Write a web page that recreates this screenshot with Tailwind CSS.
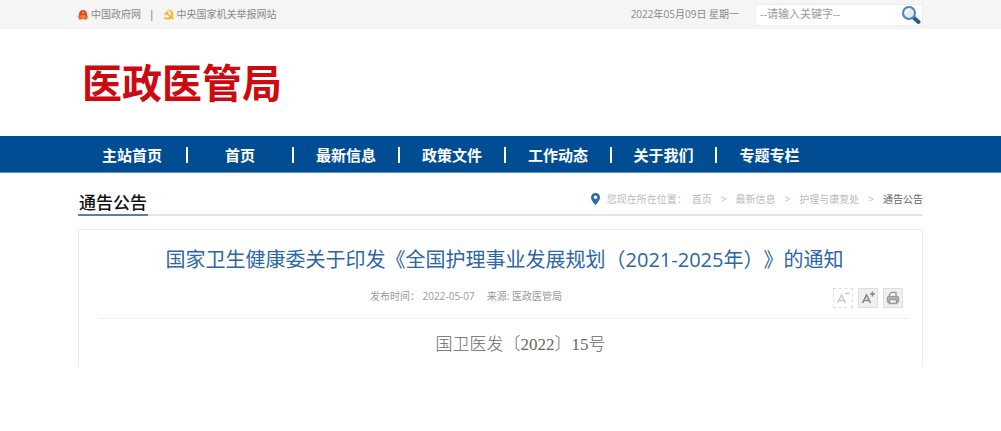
<!DOCTYPE html>
<html lang="zh-CN">
  <head>
    <meta charset="UTF-8" />
    <meta name="viewport" content="width=device-width, initial-scale=1.0" />
    <title>医政医管局</title>
    <script src="https://cdn.jsdelivr.net/npm/@tailwindcss/browser@4"></script>
  </head>
  <body class="bg-white font-['Open_Sans','Noto_Sans_CJK_SC',sans-serif] text-[10px] text-[#888] [text-spacing-trim:space-all]">
    <div class="bg-[#f5f5f5]">
      <div class="mx-auto flex h-[29px] max-w-[845px] items-center justify-between">
        <div class="flex items-center gap-2">
          <a href="#" class="flex items-center gap-[3px]">
            <svg class="size-[10px]" viewBox="0 0 10 10">
              <path d="M1 4.500C1 1.500 3 0 5 0s4 1.500 4 4.500V8H1z" fill="#e2451a" />
              <path d="M0 5.500h10L9 9.500H6.500L5 9l-1.500.5H1z" fill="#e8602a" />
              <path d="M5 1.200l.5 1 1 .1-.7.800.2 1L5 3.600l-1 .5.2-1-.7-.8 1-.1zM2.500 5.500h5v1h-5zM3.500 7.500h3v1h-3z" fill="#ffa63a" />
            </svg>
            中国政府网
          </a>
          <span class="text-[#666]">|</span>
          <a href="#" class="flex items-center gap-[3px]">
            <svg class="size-[11px]" viewBox="0 0 11 11">
              <path d="M4.500.5C9 0 11.500 4 10 7.500l1 2-1 1-1.500-1C6 11.500 2.500 10.500.5 9.500l1-1.500c2 1 4 1 5 0L3.800 5.200 2.500 6.500 1 5l3-3 2 1-1 1.200L7.800 7C9 4.500 7.500 2 4.500.5z" fill="#f5b92e" />
            </svg>
            中央国家机关举报网站
          </a>
        </div>
        <form class="flex items-center gap-4">
          <span>2022年05月09日 星期一</span>
          <div class="flex h-[22px] w-[168px] items-center border border-[#eee] bg-white pr-px pl-1">
            <input
              type="text"
              aria-label="搜索"
              placeholder="--请输入关键字--"
              class="min-w-0 flex-1 text-[11px] outline-none placeholder:text-[#999]"
            />
            <button type="button" aria-label="搜索">
              <svg class="size-5" viewBox="0 0 20 20" fill="none">
                <path d="M12.500 12.500l5 4.500" stroke="#24608f" stroke-width="4" stroke-linecap="round" />
                <circle cx="8" cy="8" r="6" fill="#dfecf6" stroke="#4a88b8" stroke-width="2" />
                <path d="M4.800 8a3.200 3.200 0 0 1 3.200-3.200" stroke="#fff" stroke-width="1.500" />
              </svg>
            </button>
          </div>
        </form>
      </div>
    </div>

    <header class="mx-auto flex h-[107px] max-w-[845px] items-center px-1">
      <h1 class="text-[40px] leading-none font-bold text-[#cc0a10]">医政医管局</h1>
    </header>

    <nav class="border-b border-[#5a93c8] bg-[#004d93]">
      <ul class="mx-auto flex h-9 max-w-[845px] items-center pt-px text-[15px] leading-4 font-bold text-white">
        <li class="w-[110px] border-r-2 text-center"><a href="#">主站首页</a></li>
        <li class="w-[106px] border-r-2 text-center"><a href="#">首页</a></li>
        <li class="w-[106px] border-r-2 text-center"><a href="#">最新信息</a></li>
        <li class="w-[106px] border-r-2 text-center"><a href="#">政策文件</a></li>
        <li class="w-[106px] border-r-2 text-center"><a href="#">工作动态</a></li>
        <li class="w-[105px] border-r-2 text-center"><a href="#">关于我们</a></li>
        <li class="w-[105px] text-center"><a href="#">专题专栏</a></li>
      </ul>
    </nav>

    <main class="mx-auto max-w-[845px]">
      <div class="mt-[18px] flex h-[25px] items-end justify-between border-b-2 border-[#e2e4e6]">
        <h2 class="-mb-[2px] border-b-2 border-[#5d7f9f] px-px text-[17px] leading-[22px] font-medium text-[#111]">通告公告</h2>
        <div class="flex items-center gap-[7px] self-start leading-4 text-[#bbb]">
          <svg class="h-3 w-[9px]" viewBox="0 0 9 12">
            <path d="M4.500 0A4.400 4.400 0 0 0 0 4.400C0 7.500 4.500 12 4.500 12S9 7.500 9 4.400A4.400 4.400 0 0 0 4.500 0z" fill="#2a6ea8" />
            <circle cx="4.500" cy="4.200" r="1.700" fill="#fff" />
          </svg>
          <div class="flex items-center gap-[9px]">
            <span class="-mr-1">您现在所在位置：</span>
            <a href="#">首页</a>
            <span>&gt;</span>
            <a href="#">最新信息</a>
            <span>&gt;</span>
            <a href="#">护理与康复处</a>
            <span>&gt;</span>
            <a href="#" class="text-[#666]">通告公告</a>
          </div>
        </div>
      </div>

      <article class="mt-[13px] border border-b-0 border-[#ececec] pr-3 pl-5">
        <h3 class="pt-4 text-center text-[20px] leading-7 text-[#2b66a5]">
          国家卫生健康委关于印发《全国护理事业发展规划（2021-2025年）》的通知
        </h3>
        <div class="flex h-[45px] items-center border-b border-[#eee] text-[#999]">
          <p class="flex flex-1 justify-center gap-3">
            <span>发布时间： 2022-05-07</span>
            <span>来源: 医政医管局</span>
          </p>
          <div class="flex gap-[5px] pt-1 pr-[7px]">
            <button type="button" aria-label="缩小字号" class="flex size-5 items-center justify-center border border-dashed border-[#ddd]">
              <svg class="size-4" viewBox="0 0 16 16" fill="none" stroke="#c8c8c8" stroke-width="1.400">
                <path d="M2.500 13L6.500 5l4 8M4 10.500h5M10.500 3.500h4" />
              </svg>
            </button>
            <button type="button" aria-label="放大字号" class="flex size-5 items-center justify-center border border-[#ddd] bg-[#f0f0f0]">
              <svg class="size-4" viewBox="0 0 16 16" fill="none" stroke="#888" stroke-width="1.600">
                <path d="M2.500 13L6.500 5l4 8M4 10.500h5M10 4h5M12.500 1.500v5" />
              </svg>
            </button>
            <button type="button" aria-label="打印" class="flex size-5 items-center justify-center border border-[#ddd] bg-[#f0f0f0]">
              <svg class="size-4" viewBox="0 0 16 16" fill="none" stroke="#999" stroke-width="1.400">
                <path d="M4.500 7V4.500l2-2h4.500V7" fill="#fff" />
                <rect x="2.500" y="6.500" width="11" height="6" rx="1.500" fill="#bbb" />
                <path d="M4.500 9.500h7v4h-7z" fill="#eee" />
              </svg>
            </button>
          </div>
        </div>
        <p class="pt-[14px] pb-[10px] text-center indent-8 font-['Liberation_Serif','Noto_Sans_CJK_SC',serif] text-[17px] leading-6 font-light text-[#666]">
          国卫医发〔2022〕15号
        </p>
      </article>
    </main>
  </body>
</html>
